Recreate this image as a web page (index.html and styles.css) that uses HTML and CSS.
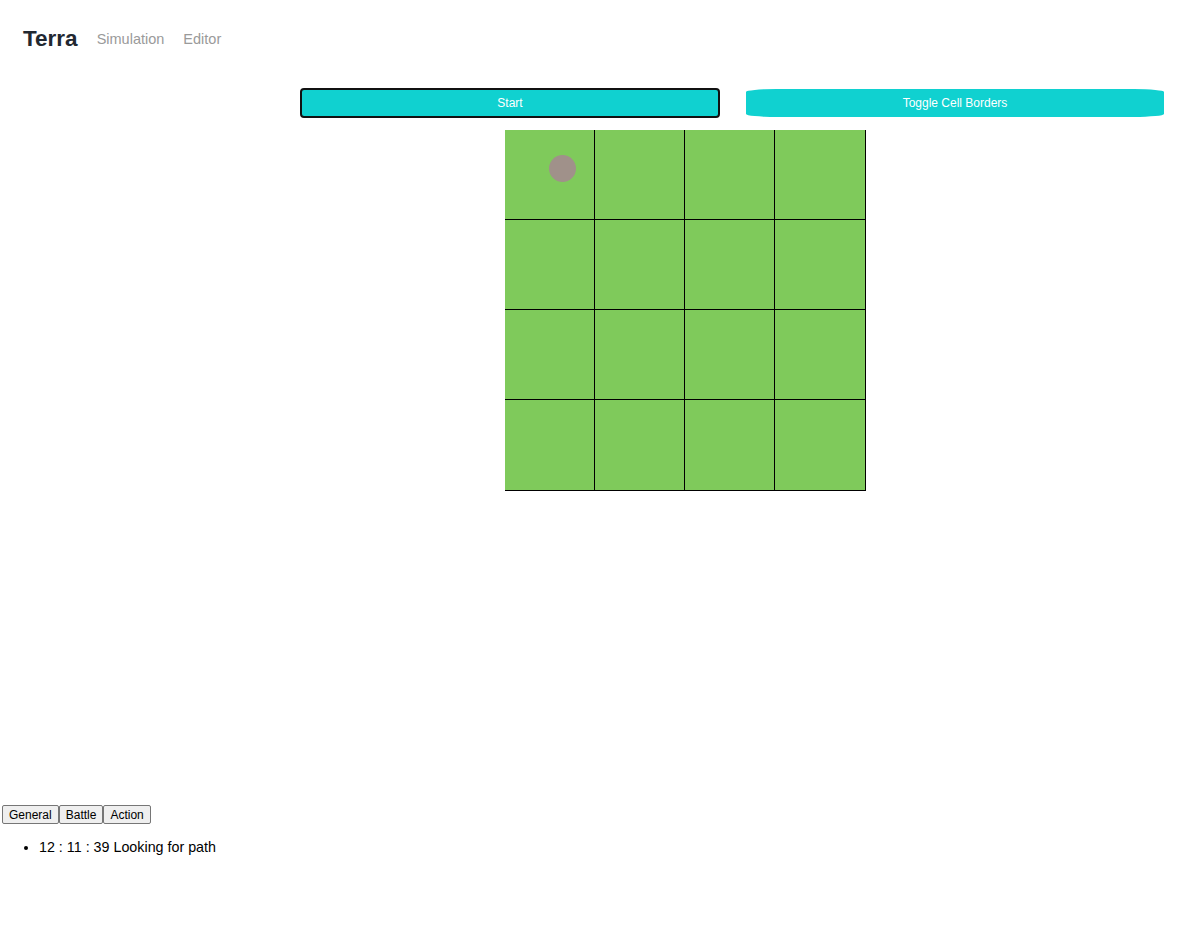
FILE: index.html
```html
<!DOCTYPE html>
<html>
<head>
<meta charset="utf-8">
<link rel="stylesheet" href="styles.css">
</head>
<body>
<header class="topbar">
  <span class="brand">Terra</span>
  <a class="nav-link">Simulation</a>
  <a class="nav-link">Editor</a>
</header>
<main class="main">
  <div class="controls">
    <button class="btn btn-start">Start</button>
    <button class="btn btn-toggle">Toggle Cell Borders</button>
  </div>
  <div class="grid">
    <div class="cell"><span class="unit"></span></div>
    <div class="cell"></div>
    <div class="cell"></div>
    <div class="cell"></div>
    <div class="cell"></div>
    <div class="cell"></div>
    <div class="cell"></div>
    <div class="cell"></div>
    <div class="cell"></div>
    <div class="cell"></div>
    <div class="cell"></div>
    <div class="cell"></div>
    <div class="cell"></div>
    <div class="cell"></div>
    <div class="cell"></div>
    <div class="cell"></div>
  </div>
</main>
<section class="log">
  <div class="tabs">
    <button class="tab">General</button><button class="tab">Battle</button><button class="tab">Action</button>
  </div>
  <ul class="log-list">
    <li>12 : 11 : 39 Looking for path</li>
  </ul>
</section>
</body>
</html>
```
FILE: styles.css
```css
* { box-sizing: border-box; }
body {
  margin: 0;
  font-family: "Liberation Sans", Arial, sans-serif;
  background: #fff;
  color: #000;
}
.topbar {
  display: flex;
  align-items: center;
  height: 88px;
  padding: 0 0 10px 23px;
}
.brand {
  font-size: 22.5px;
  font-weight: bold;
  color: #222831;
  margin-right: 19px;
}
.nav-link {
  font-size: 14.5px;
  color: #9a9a9a;
  margin-right: 19px;
}
.main {
  padding-left: 300px;
}
.controls {
  display: flex;
  gap: 26px;
  height: 42px;
}
.btn {
  height: 30px;
  width: 420px;
  background: #10d1d0;
  color: #fff;
  font-family: "Liberation Sans", Arial, sans-serif;
  font-size: 12px;
  padding: 0;
}
.btn-start {
  border: 2px solid #111;
  border-radius: 4px;
}
.btn-toggle {
  border: none;
  width: 418px;
  height: 28px;
  margin-top: 1px;
  border-radius: 30px / 3px;
}
.grid {
  margin-left: 205px;
  display: grid;
  grid-template-columns: 90px 90px 90px 91px;
  grid-template-rows: 90px 90px 90px 91px;
  width: 361px;
  background: #7fca5b;
}
.cell {
  background: #7fca5b;
  border-right: 1px solid #000;
  border-bottom: 1px solid #000;
  position: relative;
}
.unit {
  position: absolute;
  left: 44px;
  top: 25px;
  width: 27px;
  height: 27px;
  border-radius: 50%;
  background: #a0918a;
}
.log {
  margin-top: 314px;
  padding-left: 2px;
}
.tabs {
  display: flex;
}
.tab {
  font-family: "Liberation Sans", Arial, sans-serif;
  font-size: 12px;
  height: 19px;
  padding: 0 6px;
  background: #efefef;
  border: 1px solid #767676;
  border-radius: 2px;
  color: #000;
}
.log-list {
  margin: 15px 0 0 0;
  padding-left: 37px;
  font-size: 14.3px;
}
```
